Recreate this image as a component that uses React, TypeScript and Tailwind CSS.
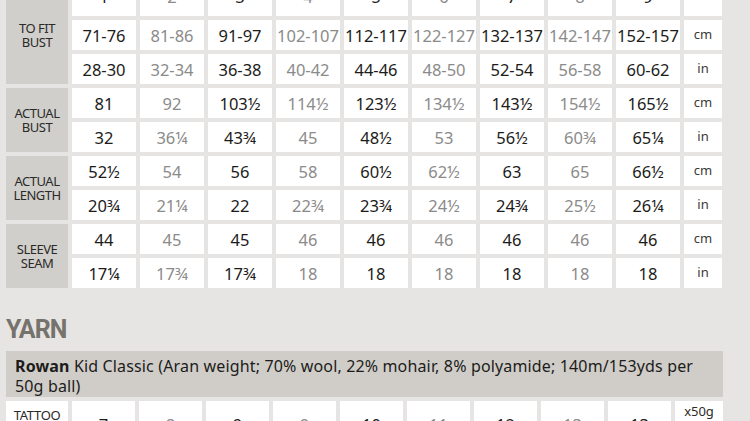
import React from "react";

const sizes = ["1", "2", "3", "4", "5", "6", "7", "8", "9"];

const groups = [
  {
    label: ["TO FIT", "BUST"],
    rows: [
      { unit: "cm", vals: ["71-76", "81-86", "91-97", "102-107", "112-117", "122-127", "132-137", "142-147", "152-157"] },
      { unit: "in", vals: ["28-30", "32-34", "36-38", "40-42", "44-46", "48-50", "52-54", "56-58", "60-62"] },
    ],
  },
  {
    label: ["ACTUAL", "BUST"],
    rows: [
      { unit: "cm", vals: ["81", "92", "103½", "114½", "123½", "134½", "143½", "154½", "165½"] },
      { unit: "in", vals: ["32", "36¼", "43¾", "45", "48½", "53", "56½", "60¾", "65¼"] },
    ],
  },
  {
    label: ["ACTUAL", "LENGTH"],
    rows: [
      { unit: "cm", vals: ["52½", "54", "56", "58", "60½", "62½", "63", "65", "66½"] },
      { unit: "in", vals: ["20¾", "21¼", "22", "22¾", "23¾", "24½", "24¾", "25½", "26¼"] },
    ],
  },
  {
    label: ["SLEEVE", "SEAM"],
    rows: [
      { unit: "cm", vals: ["44", "45", "45", "46", "46", "46", "46", "46", "46"] },
      { unit: "in", vals: ["17¼", "17¾", "17¾", "18", "18", "18", "18", "18", "18"] },
    ],
  },
];

const yarnQty = ["7", "8", "9", "9", "10", "11", "12", "13", "13"];

function tone(i: number) {
  return i % 2 === 0 ? "text-[#1c1c1a]" : "text-[#8b8b8a]";
}

export default function App() {
  return (
    <div className="w-[750px] h-[421px] overflow-hidden bg-[#e6e5e3] font-['Noto_Sans',sans-serif]">
      <div className="pl-[6px] -mt-[14px]">
        {/* Size table */}
        <div className="grid grid-cols-[62px_repeat(9,64px)_38px] auto-rows-[30px] gap-[4px]">
          {groups.map((g, gi) => (
            <React.Fragment key={gi}>
              <div
                className={`${gi === 0 ? "row-span-3" : "row-span-2"} flex flex-col items-center justify-center bg-[#d1cfcb] text-[13px] leading-[14px] tracking-[-0.5px] text-[#2a2a28]`}
              >
                {g.label.map((l) => (
                  <span key={l}>{l}</span>
                ))}
              </div>
              {gi === 0 && (
                <>
                  {sizes.map((s, i) => (
                    <div key={s} className={`flex items-end justify-center pb-[8px] bg-white text-[16.5px] leading-[23px] ${tone(i)}`}>
                      {s}
                    </div>
                  ))}
                  <div className="bg-white" />
                </>
              )}
              {g.rows.map((r, ri) => (
                <React.Fragment key={ri}>
                  {r.vals.map((v, i) => (
                    <div
                      key={i}
                      className={`flex items-center justify-center whitespace-nowrap bg-white text-[16.5px] leading-[23px] ${tone(i)}`}
                    >
                      {v}
                    </div>
                  ))}
                  <div className="flex items-center justify-center bg-white text-[13px] text-[#3a3a38]">{r.unit}</div>
                </React.Fragment>
              ))}
            </React.Fragment>
          ))}
        </div>

        {/* Yarn heading */}
        <h2 className="mt-[29px] font-['Roboto',sans-serif] font-bold text-[25px] leading-[25px] tracking-[-1px] text-[#76736c]">
          YARN
        </h2>

        <div className="mt-[9px] w-[717px] bg-[#d0cdc9] pl-[9px] pr-[6px] pt-[5px] pb-[1px] text-[16px] leading-[20px] tracking-[0.15px] text-[#1c1c1a]">
          <span className="font-bold">Rowan</span> Kid Classic (Aran weight; 70% wool, 22% mohair, 8% polyamide; 140m/153yds per
          <br />
          50g ball)
        </div>

        <div className="mt-[4px] grid grid-cols-[62px_repeat(9,63px)_48px] gap-[4px] h-[40px]">
          <div className="flex justify-center bg-white pt-[6px] text-[13px] leading-[16px] tracking-[-0.3px] text-[#2a2a28]">TATTOO</div>
          {yarnQty.map((q, i) => (
            <div key={i} className={`flex justify-center bg-white pt-[12px] text-[16.5px] leading-[23px] ${tone(i)}`}>
              {q}
            </div>
          ))}
          <div className="flex justify-center bg-white pt-[2px] text-[13px] leading-[16px] text-[#2a2a28]">x50g</div>
        </div>
      </div>
    </div>
  );
}
